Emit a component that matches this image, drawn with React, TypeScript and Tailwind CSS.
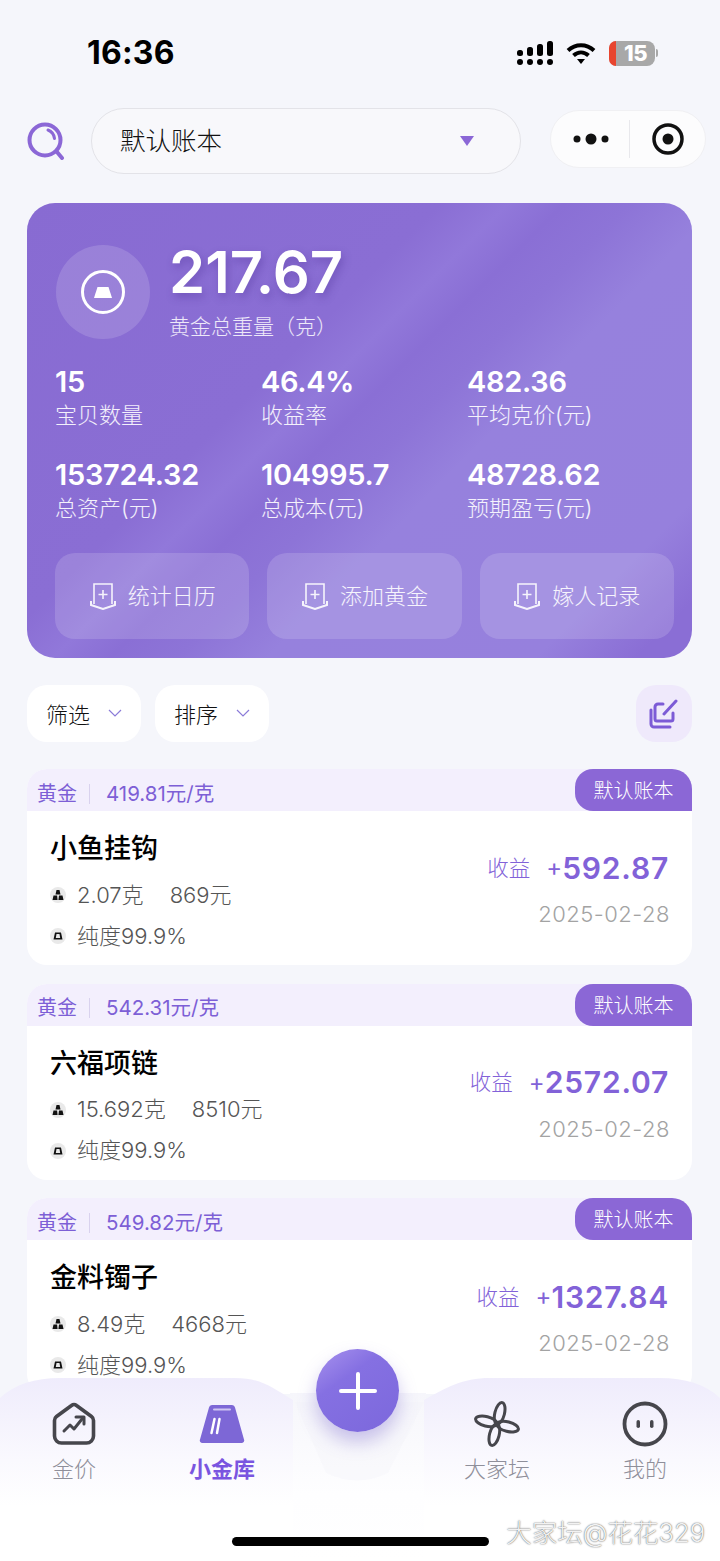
const stats = [
  { value: "15", label: "宝贝数量" },
  { value: "46.4%", label: "收益率" },
  { value: "482.36", label: "平均克价(元)" },
  { value: "153724.32", label: "总资产(元)" },
  { value: "104995.7", label: "总成本(元)" },
  { value: "48728.62", label: "预期盈亏(元)" },
];

const actions = ["统计日历", "添加黄金", "嫁人记录"];

const items = [
  { name: "小鱼挂钩", price: "419.81元/克", weight: "2.07克", cost: "869元", profit: "592.87" },
  { name: "六福项链", price: "542.31元/克", weight: "15.692克", cost: "8510元", profit: "2572.07" },
  { name: "金料镯子", price: "549.82元/克", weight: "8.49克", cost: "4668元", profit: "1327.84" },
];

function StatusBar() {
  return (
    <div className="flex h-[108px] items-start justify-between pl-[87px] pr-[62px] pt-[34px]">
      <span className="text-[32px] font-bold leading-[38px] tracking-[0.2px] text-black">16:36</span>
      <div className="flex items-center gap-[13px] pt-[6px]">
        <svg width="37" height="26" viewBox="0 0 37 26" fill="#000">
          <rect x="1" y="10" width="6" height="6" rx="2.5" />
          <rect x="11" y="7" width="6" height="9" rx="2.5" />
          <rect x="21" y="4" width="6" height="12" rx="2.5" />
          <rect x="31" y="1" width="6" height="15" rx="2.5" />
          <rect x="1" y="19" width="6" height="6" rx="3" />
          <rect x="11" y="19" width="6" height="6" rx="3" />
          <rect x="21" y="19" width="6" height="6" rx="3" />
          <rect x="31" y="19" width="6" height="6" rx="3" />
        </svg>
        <svg width="30" height="24" viewBox="0 0 30 24" fill="none" stroke="#000" strokeWidth="4">
          <path d="M2 9.5C9.5 2.5 20.5 2.5 28 9.5" />
          <path d="M7.5 14.5C12 10.5 18 10.5 22.5 14.5" />
          <path d="M11 18h8l-4 5z" fill="#000" stroke="none" />
        </svg>
        <div className="flex items-center gap-[1px]">
          <div className="relative flex h-[25px] w-[46px] items-center justify-center rounded-[8px] bg-[#a8a8a8] pl-[7px]">
            <div className="absolute inset-y-0 left-0 w-[7px] rounded-l-[8px] bg-[#e8452f]" />
            <span className="text-[22px] font-extrabold leading-[25px] tracking-[-0.5px] text-white">15</span>
          </div>
          <div className="h-[8px] w-[2px] rounded-r-full bg-[#a8a8a8]" />
        </div>
      </div>
    </div>
  );
}

function TopNav() {
  return (
    <div className="mb-[29px] flex h-[66px] items-center pl-[27px]">
      <svg width="38" height="38" viewBox="0 0 38 38" fill="none" stroke="#8b67d6" strokeLinecap="round">
        <circle cx="18" cy="18" r="15.5" strokeWidth="4" />
        <path d="M21 8C25 9.5 27 12.5 27.5 16.5" strokeWidth="3" />
        <path d="M30 30l5 6" strokeWidth="4" />
      </svg>
      <div className="ml-[26px] flex h-[66px] w-[430px] items-center justify-between rounded-[33px] border border-[#e3e3e8] bg-[#f8f8fb] pl-[28px] pr-[46px]">
        <span className="text-[25.5px] font-light text-[#111]">默认账本</span>
        <svg width="14" height="10" viewBox="0 0 14 10" fill="#8b67d6">
          <path d="M0 0h14L7 10z" />
        </svg>
      </div>
      <div className="ml-[29px] mb-[4px] flex h-[58px] w-[156px] items-center rounded-[29px] border border-[#f0f0f3] bg-[#fcfcfd]">
        <div className="flex w-[78px] justify-center pl-[2px]">
          <svg width="36" height="14" viewBox="0 0 36 14" fill="#111">
            <circle cx="4" cy="7" r="3.5" />
            <circle cx="18" cy="7" r="5.5" />
            <circle cx="32" cy="7" r="3.5" />
          </svg>
        </div>
        <div className="h-[38px] w-px bg-[#e8e8ec]" />
        <div className="flex flex-1 justify-center">
          <svg width="32" height="32" viewBox="0 0 32 32" fill="none">
            <circle cx="16" cy="16" r="14" stroke="#111" strokeWidth="3.5" />
            <circle cx="16" cy="16" r="5.5" fill="#111" />
          </svg>
        </div>
      </div>
    </div>
  );
}

function ActionIcon() {
  return (
    <svg width="28" height="28" viewBox="0 0 28 28" fill="none" stroke="#fff" strokeWidth="1.6" className="opacity-90">
      <path d="M5 22V2h18v20" />
      <path d="M14 8v9M9.5 12.5h9" />
      <path d="M2 19v4l12 4 12-4v-4" strokeWidth="2" />
    </svg>
  );
}

function SummaryCard() {
  return (
    <div className="ml-[27px] h-[455px] w-[665px] rounded-[28px] bg-[linear-gradient(135deg,#886bd2_0%,#8a6ed4_37%,#9178da_43%,#8a6fd5_48%,#8d74d7_54%,#9681dd_62%,#9680dd_86%,#8a6ed5_95%)] pl-[28px] pr-[18px] pt-[42px]">
      <div className="flex h-[94px]">
        <div className="ml-[1px] flex size-[94px] items-center justify-center rounded-full bg-white/15">
          <svg width="44" height="44" viewBox="0 0 44 44" fill="none">
            <circle cx="22" cy="22" r="20.5" stroke="#fff" strokeWidth="3" />
            <path d="M16.500 17h11l3.500 11H13z" fill="#fff" />
          </svg>
        </div>
        <div className="ml-[19px]">
          <div className="h-[54px] text-[58px] font-semibold leading-[54px] text-white [text-shadow:2px_4px_8px_rgba(70,40,140,0.35)]">217.67</div>
          <div className="mt-[13px] text-[21px] font-light leading-[30px] text-white/85">黄金总重量（克）</div>
        </div>
      </div>
      <div className="mt-[26px] grid grid-cols-[206px_206px_1fr] gap-y-[27px]">
        {stats.map((s) => (
          <div key={s.label}>
            <div className="h-[34px] text-[29px] font-semibold leading-[34px] tracking-[-0.3px] text-white">{s.value}</div>
            <div className="h-[32px] text-[22px] font-light leading-[32px] text-white/90">{s.label}</div>
          </div>
        ))}
      </div>
      <div className="mt-[29px] grid grid-cols-3 gap-[18px]">
        {actions.map((a) => (
          <div key={a} className="flex h-[86px] items-center justify-center gap-[11px] rounded-[20px] bg-white/15">
            <ActionIcon />
            <span className="text-[22px] font-light text-white/90">{a}</span>
          </div>
        ))}
      </div>
    </div>
  );
}

function FilterChip({ label }: { label: string }) {
  return (
    <div className="flex h-[57px] w-[114px] items-center justify-between rounded-[20px] bg-white pl-[19px] pr-[19px] pt-[4px]">
      <span className="text-[22px] font-light text-[#111]">{label}</span>
      <svg width="14" height="9" viewBox="0 0 14 9" fill="none" stroke="#8b7bd8" strokeWidth="1.2" className="mb-[4px]">
        <path d="M1 1l6 6 6-6" />
      </svg>
    </div>
  );
}

function FilterRow() {
  return (
    <div className="ml-[27px] mt-[27px] flex w-[665px] gap-[14px]">
      <FilterChip label="筛选" />
      <FilterChip label="排序" />
      <div className="ml-auto flex h-[57px] w-[56px] items-center justify-center rounded-[20px] bg-[#efe9fb]">
        <svg width="30" height="30" viewBox="0 0 30 30" fill="none" stroke="#7c5bd6" strokeWidth="3" strokeLinecap="round" strokeLinejoin="round">
          <path d="M14 5H9a3 3 0 0 0-3 3v12a2 2 0 0 0 2 2h14a2 2 0 0 0 2-2v-6" />
          <path d="M27 2L15 15" />
          <path d="M2 11v14a3 3 0 0 0 3 3h16" />
        </svg>
      </div>
    </div>
  );
}

function MetaIcon({ kind }: { kind: "stack" | "bar" }) {
  return (
    <span className="flex size-[16px] shrink-0 items-center justify-center rounded-full bg-[#e9e9e9]">
      <svg width="12" height="12" viewBox="0 0 12 12" fill="#111">
        {kind === "stack" ? (
          <path d="M4.5 1h3l1 4.5h-5zM1.5 6.5h3.6l.5 4.5H.5zM7 6.5h3.5l1 4.5H6.4z" />
        ) : (
          <path d="M3 2.5h6l1.5 7h-9zM4.5 4l-.7 4h4.4l-.7-4z" fillRule="evenodd" />
        )}
      </svg>
    </span>
  );
}

function GoldCard({ item }: { item: (typeof items)[number] }) {
  return (
    <div className="h-[196px] overflow-hidden rounded-[20px] bg-white">
      <div className="flex h-[42px] items-center justify-between bg-[#f3effd]">
        <div className="flex items-center pl-[10px] pt-[7px] text-[20px] leading-[28px] text-[#7d5fd6]">
          <span>黄金</span>
          <span className="ml-[12px] mr-[16px] h-[20px] w-px bg-[#d9d2ee]" />
          <span className="text-[20.5px]">{item.price}</span>
        </div>
        <div className="flex h-[42px] w-[117px] items-center justify-center rounded-tl-[18px] rounded-bl-[18px] bg-[#8b67d6] pt-[2px] text-[20px] font-light text-white">
          默认账本
        </div>
      </div>
      <div className="flex justify-between pl-[23px] pr-[22px]">
        <div className="pt-[21px]">
          <div className="text-[27px] font-medium leading-[34px] text-black">{item.name}</div>
          <div className="mt-[14px] flex h-[30px] items-center text-[22px] font-light text-[#555]">
            <MetaIcon kind="stack" />
            <span className="ml-[11px]">{item.weight}</span>
            <span className="ml-[26px]">{item.cost}</span>
          </div>
          <div className="mt-[11px] flex h-[30px] items-center text-[22px] font-light text-[#555]">
            <MetaIcon kind="bar" />
            <span className="ml-[11px]">纯度99.9%</span>
          </div>
        </div>
        <div className="flex flex-col items-end pt-[40px]">
          <div className="flex h-[34px] items-center pr-[1px] text-[#8262d8]">
            <span className="text-[21.5px] font-light">收益</span>
            <span className="ml-[16px] text-[24px]">+</span>
            <span className="text-[30px] font-semibold tracking-[0.8px]">{item.profit}</span>
          </div>
          <div className="mt-[14px] text-[22px] font-light leading-[30px] tracking-[0.5px] text-[#a3a3a3]">2025-02-28</div>
        </div>
      </div>
    </div>
  );
}

function HomeIcon() {
  return (
    <svg width="44" height="44" viewBox="0 0 44 44" fill="none" stroke="#46464c" strokeLinecap="round" strokeLinejoin="round">
      <path d="M19.5 3.5a4 4 0 0 1 5 0l15 11a5 5 0 0 1 2 4V34a7 7 0 0 1-7 7H9.500a7 7 0 0 1-7-7V18.500a5 5 0 0 1 2-4z" strokeWidth="3.600" />
      <path d="M12 29l6-6 4 4 8-10" strokeWidth="3" />
      <path d="M24 15h8v7" strokeWidth="3" />
    </svg>
  );
}

function GoldIcon() {
  return (
    <svg width="46" height="40" viewBox="0 0 46 40" fill="none">
      <path d="M13 1h20a3 3 0 0 1 3 2.500l9 32a2.500 2.500 0 0 1-2 3.500H3a2.500 2.500 0 0 1-2-3.500l9-32A3 3 0 0 1 13 1z" fill="#7d67d6" />
      <path d="M15 5.500h16" stroke="#cfc5f2" strokeWidth="2" strokeLinecap="round" />
      <path d="M12.500 29l3-14M18 29l2.500-14" stroke="#fff" strokeWidth="2.500" strokeLinecap="round" />
    </svg>
  );
}

function FanIcon() {
  return (
    <svg width="46" height="46" viewBox="0 0 46 46" fill="none" stroke="#46464c" strokeWidth="3">
      <ellipse cx="23" cy="12" rx="4.800" ry="11" transform="rotate(14 23 23)" />
      <ellipse cx="23" cy="12" rx="4.800" ry="11" transform="rotate(104 23 23)" />
      <ellipse cx="23" cy="12" rx="4.800" ry="11" transform="rotate(194 23 23)" />
      <ellipse cx="23" cy="12" rx="4.800" ry="11" transform="rotate(284 23 23)" />
    </svg>
  );
}

function FaceIcon() {
  return (
    <svg width="46" height="46" viewBox="0 0 46 46" fill="none">
      <circle cx="23" cy="23" r="20.500" stroke="#46464c" strokeWidth="3.800" />
      <rect x="14.500" y="19" width="3.500" height="8" rx="1.750" fill="#46464c" />
      <rect x="28" y="19" width="3.500" height="8" rx="1.750" fill="#46464c" />
    </svg>
  );
}

function TabItem({ label, active, icon }: { label: string; active?: boolean; icon: React.ReactNode }) {
  return (
    <div className="flex flex-col items-center">
      <div className="flex h-[44px] items-center justify-center">{icon}</div>
      <div className={`mt-[8px] text-[22px] leading-[30px] ${active ? "font-bold text-[#7a55e0]" : "font-light text-[#8f8f9a]"}`}>
        {label}
      </div>
    </div>
  );
}

function TabBar() {
  return (
    <div className="absolute inset-x-0 bottom-0 h-[183px]">
      <svg width="720" height="183" viewBox="0 0 720 183" className="absolute inset-0">
        <defs>
          <linearGradient id="barFill" x1="0" y1="0" x2="0" y2="1">
            <stop offset="0" stopColor="#efecfc" />
            <stop offset="0.45" stopColor="#faf9fe" />
            <stop offset="0.7" stopColor="#ffffff" />
          </linearGradient>
          <linearGradient id="barMid" x1="0" y1="0" x2="0" y2="1">
            <stop offset="0" stopColor="#f6f6fb" />
            <stop offset="0.6" stopColor="#fefeff" />
            <stop offset="1" stopColor="#ffffff" />
          </linearGradient>
        </defs>
        <path d="M290 15H426V183H290z" fill="url(#barMid)" />
        <path d="M0 20C15 6 35 0 60 0H235C262 0 272 10 293 22V183H0z" fill="url(#barFill)" />
        <path d="M720 20C705 6 685 0 660 0H490C462 0 446 10 424 22V183H720z" fill="url(#barFill)" />
        <path d="M295 24L326 95Q357 110 388 95L424 24z" fill="#f2f1f9" opacity="0.3" />
      </svg>
      <div className="relative grid grid-cols-[148px_148px_122px_158px_138px] pt-[24px]">
        <TabItem label="金价" icon={<HomeIcon />} />
        <TabItem label="小金库" active icon={<GoldIcon />} />
        <div />
        <TabItem label="大家坛" icon={<FanIcon />} />
        <TabItem label="我的" icon={<FaceIcon />} />
      </div>
      <div className="absolute left-[316px] top-[-29px] flex size-[83px] items-center justify-center rounded-full bg-[linear-gradient(145deg,#a892ee_0%,#8570e2_35%,#7c68dc_100%)] shadow-[0_10px_18px_rgba(110,90,200,0.35)]">
        <svg width="40" height="40" viewBox="0 0 40 40" stroke="#fff" strokeWidth="4" strokeLinecap="round">
          <path d="M20 3v34M3 20h34" />
        </svg>
      </div>
      <div className="absolute left-[232px] top-[159px] h-[9px] w-[257px] rounded-full bg-black" />
      <div className="absolute right-[15px] top-[138px] text-[25.5px] font-light leading-[34px] text-[#f2f2f2] [text-shadow:0_0_1.5px_#333]">
        大家坛@花花329
      </div>
    </div>
  );
}

export default function App() {
  return (
    <div className="relative h-[1561px] w-[720px] overflow-hidden bg-[#f5f6fb] font-[Inter,'Noto_Sans_CJK_SC',sans-serif]">
      <StatusBar />
      <TopNav />
      <SummaryCard />
      <FilterRow />
      <div className="ml-[27px] mt-[27px] flex w-[665px] flex-col gap-[18.5px]">
        {items.map((item) => (
          <GoldCard key={item.name} item={item} />
        ))}
      </div>
      <TabBar />
    </div>
  );
}
